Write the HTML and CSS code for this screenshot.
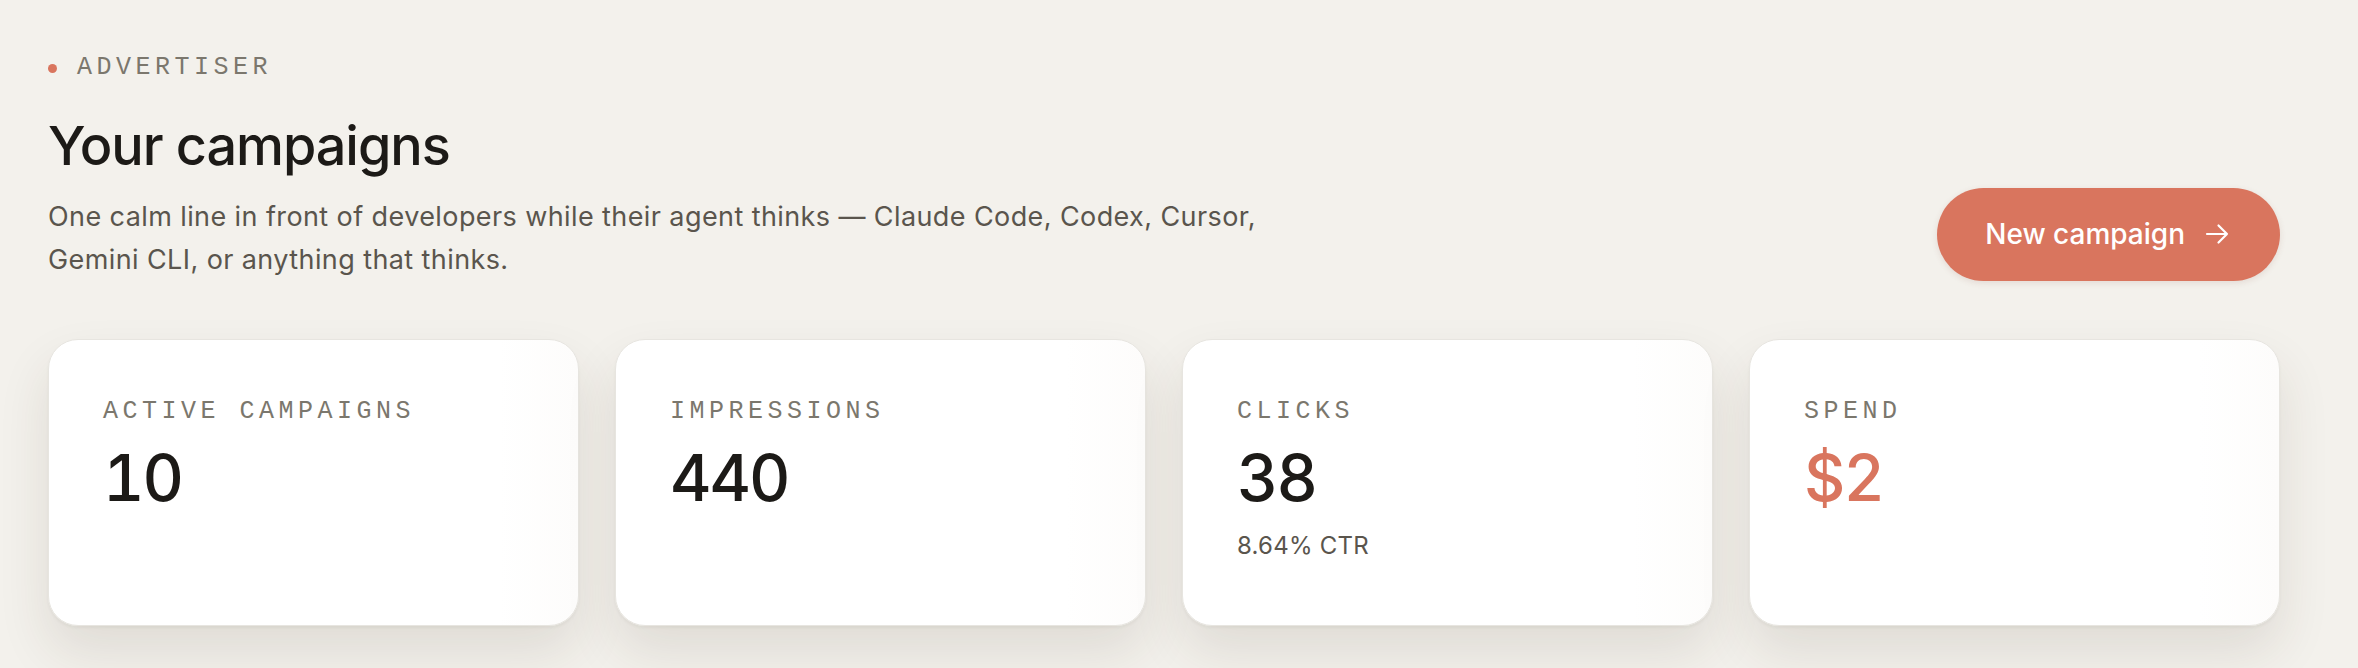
FILE: index.html
```html
<!DOCTYPE html>
<html lang="en">
<head>
    <meta charset="UTF-8">
    <meta name="viewport" content="width=device-width, initial-scale=1.0">
    <title>Your campaigns</title>
    <link rel="stylesheet" href="styles.css">
</head>
<body>
    <main class="page">
        <header class="page-header">
            <div class="intro">
                <div class="eyebrow"><span class="eyebrow-dot"></span>ADVERTISER</div>
                <h1>Your campaigns</h1>
                <p class="lede">One calm line in front of developers while their agent thinks — Claude Code, Codex, Cursor, Gemini CLI, or anything that thinks.</p>
            </div>
            <button class="new-btn" type="button">
                New campaign
                <svg class="arrow" width="24" height="24" viewBox="0 0 24 24" fill="none" stroke="currentColor" stroke-width="2.2" stroke-linecap="round" stroke-linejoin="round">
                    <path d="M2 12h20M13.5 3.5 22 12l-8.5 8.5"/>
                </svg>
            </button>
        </header>

        <section class="stats">
            <div class="stat-card">
                <div class="stat-label">ACTIVE CAMPAIGNS</div>
                <div class="stat-value">10</div>
            </div>
            <div class="stat-card">
                <div class="stat-label">IMPRESSIONS</div>
                <div class="stat-value">440</div>
            </div>
            <div class="stat-card">
                <div class="stat-label">CLICKS</div>
                <div class="stat-value">38</div>
                <div class="stat-note">8.64% CTR</div>
            </div>
            <div class="stat-card">
                <div class="stat-label">SPEND</div>
                <div class="stat-value accent">$2</div>
            </div>
        </section>
    </main>
</body>
</html>
```

FILE: styles.css
```css
body {
    margin: 0;
    min-height: 100vh;
    background-color: #f3f1ec;
    font-family: Inter, "Noto Sans", sans-serif;
    color: #1c1a17;
}

.page {
    padding: 50px 78px 0 48px;
}

.page-header {
    display: flex;
    justify-content: space-between;
    align-items: flex-end;
    margin-bottom: 58px;
}

.eyebrow {
    display: flex;
    align-items: center;
    gap: 20px;
    font-family: "Liberation Mono", monospace;
    font-size: 25px;
    line-height: 36px;
    letter-spacing: 0.18em;
    color: #7b776d;
}

.eyebrow-dot {
    width: 9px;
    height: 9px;
    border-radius: 50%;
    background-color: #d9755e;
}

h1 {
    margin: 28px 0 0;
    font-size: 54px;
    font-weight: 500;
    line-height: 1.2;
    letter-spacing: -0.02em;
}

.lede {
    margin: 16px 0 0;
    max-width: 1260px;
    font-size: 27px;
    line-height: 43px;
    letter-spacing: 0.015em;
    color: #5a554d;
}

.new-btn {
    display: flex;
    align-items: center;
    gap: 20px;
    padding: 31px 51px 31px 48px;
    font-family: inherit;
    font-size: 28px;
    font-weight: 500;
    line-height: 31px;
    color: #fff;
    background-color: #d9755e;
    border: none;
    border-radius: 999px;
    box-shadow: 0 2px 6px rgba(120, 60, 40, 0.12);
    cursor: pointer;
}

.stats {
    display: grid;
    grid-template-columns: repeat(4, 1fr);
    gap: 36px;
}

.stat-card {
    padding: 54px 54px 60px;
    background: linear-gradient(90deg, #fff 85%, #fdfcfb);
    border: 1px solid #e7e5e0;
    border-radius: 30px;
    box-shadow: 0 2px 3px rgba(60, 50, 30, 0.05), 0 26px 52px rgba(60, 50, 30, 0.11);
}

.stat-label {
    font-family: "Liberation Mono", monospace;
    font-size: 25px;
    line-height: 36px;
    letter-spacing: 0.18em;
    color: #7b776d;
}

.stat-value {
    margin-top: 16px;
    font-size: 64px;
    font-weight: 500;
    line-height: 1;
    letter-spacing: -0.03em;
    font-variant-numeric: tabular-nums;
    color: #1c1a17;
}

.stat-value.accent {
    color: #d9755e;
}

.stat-note {
    margin-top: 17px;
    font-size: 24px;
    line-height: 38px;
    letter-spacing: 0.01em;
    color: #5a554d;
}
```
